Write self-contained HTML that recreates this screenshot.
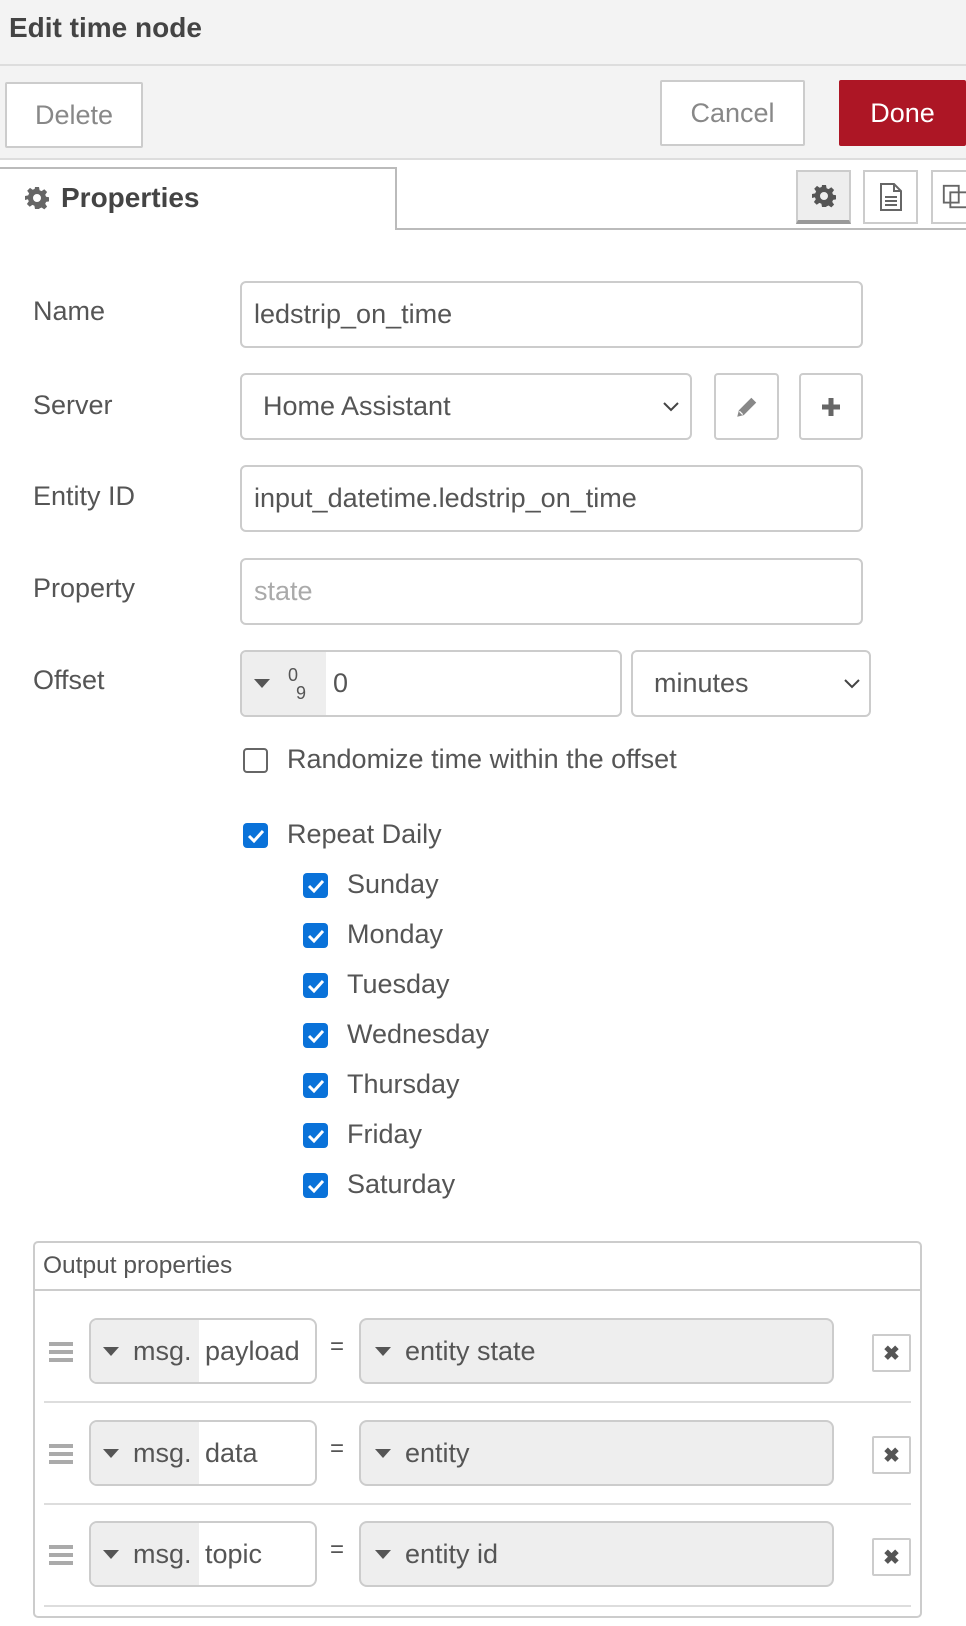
<!DOCTYPE html>
<html><head><meta charset="utf-8"><style>
*{box-sizing:border-box;margin:0;padding:0}
body{width:966px;height:1626px;background:#fff;font-family:"Liberation Sans",Arial,sans-serif;color:#555;position:relative;overflow:hidden}
.a{position:absolute}
.hdr{left:0;top:0;width:966px;height:66px;background:#f3f3f3;border-bottom:2px solid #ddd}
.bar{left:0;top:66px;width:966px;height:94px;background:#f3f3f3;border-bottom:2px solid #ddd}
.btn{background:#fff;border:2px solid #ccc;border-radius:2px;display:flex;align-items:center;justify-content:center;font-size:27px;color:#888}
.lbl{left:33px;font-size:27px;color:#555}
.inp{left:240px;width:623px;height:67px;border:2px solid #ccc;border-radius:6px;background:#fff;font-size:27px;color:#555;display:flex;align-items:center;padding-left:12px}
.cb{width:25px;height:25px;border-radius:4px;background:#0a72d9;display:flex;align-items:center;justify-content:center}
.cbt{font-size:27px;color:#555}
.fld{height:66px;border:2px solid #ccc;border-radius:8px;display:flex;align-items:center;font-size:27px;color:#555;overflow:hidden}
.sep{left:44px;width:867px;height:2px;background:#ddd}
.xb{width:39px;height:38px;border:2px solid #ccc;border-radius:2px;background:#fff;display:flex;align-items:center;justify-content:center;font-size:20px;color:#555;font-weight:bold}
.tri{width:0;height:0;border-left:8px solid transparent;border-right:8px solid transparent;border-top:9px solid #555;display:inline-block}
.hand{width:24px}
.hand div{height:4px;background:#aaa;margin-bottom:4px}
</style></head><body>
<svg width="0" height="0" style="position:absolute"><defs><symbol id="gear" viewBox="0 0 24 24"><path fill-rule="evenodd" d="M10 1h4l.6 3.2 2 .9 2.7-1.9 2.8 2.8-1.9 2.7.9 2 3.2.6v4l-3.2.6-.9 2 1.9 2.7-2.8 2.8-2.7-1.9-2 .9L14 23h-4l-.6-3.2-2-.9-2.7 1.9-2.8-2.8 1.9-2.7-.9-2L0 14v-4l3.2-.6.9-2L2.2 4.7 5 1.9l2.7 1.9 2-.9zM12 8a4 4 0 100 8 4 4 0 000-8z"/></symbol></defs></svg>
<div class="a hdr"><div class="a" style="left:9px;top:12px;font-size:28px;font-weight:bold;color:#444">Edit time node</div></div>
<div class="a bar"></div>
<div class="a btn" style="left:5px;top:82px;width:138px;height:66px">Delete</div>
<div class="a btn" style="left:660px;top:80px;width:145px;height:66px">Cancel</div>
<div class="a btn" style="left:839px;top:80px;width:127px;height:66px;background:#ad1625;border-color:#ad1625;color:#fff">Done</div>

<div class="a" style="left:396px;top:228px;width:570px;height:2px;background:#bbb"></div>
<div class="a" style="left:0;top:167px;width:397px;height:63px;border:2px solid #bbb;border-left:none;border-bottom:none;background:#fff"></div>
<svg class="a" style="left:25px;top:186px" width="24" height="24" fill="#666"><use href="#gear"/></svg>
<div class="a" style="left:61px;top:182px;font-size:28px;font-weight:bold;color:#444">Properties</div>
<div class="a" style="left:796px;top:170px;width:55px;height:54px;background:#eee;border:2px solid #ccc;border-bottom:4px solid #999;display:flex;align-items:center;justify-content:center"><svg width="24" height="24" fill="#555"><use href="#gear"/></svg></div>
<div class="a" style="left:863px;top:170px;width:55px;height:54px;background:#fff;border:2px solid #ccc;display:flex;align-items:center;justify-content:center">
<svg width="24" height="30" viewBox="0 0 24 30"><path d="M2 2h13l7 7v19H2z M15 2v7h7" fill="none" stroke="#666" stroke-width="2"/><path d="M6 15h12M6 19h12M6 23h12" stroke="#666" stroke-width="2"/></svg></div>
<div class="a" style="left:931px;top:170px;width:40px;height:54px;background:#fff;border:2px solid #ccc;display:flex;align-items:center;padding-left:8px">
<svg width="30" height="30" viewBox="0 0 30 30"><rect x="3" y="3" width="16" height="18" fill="none" stroke="#666" stroke-width="2"/><rect x="10" y="10" width="18" height="16" fill="none" stroke="#666" stroke-width="2"/></svg></div>

<div class="a lbl" style="top:296px">Name</div>
<div class="a inp" style="top:281px">ledstrip_on_time</div>
<div class="a lbl" style="top:390px">Server</div>
<div class="a inp" style="top:373px;width:452px;padding-left:21px">Home Assistant<svg class="a" style="right:10px;top:26px" width="18" height="12" viewBox="0 0 18 12"><path d="M2 2l7 7 7-7" fill="none" stroke="#444" stroke-width="2"/></svg></div>
<div class="a btn" style="left:714px;top:373px;width:65px;height:67px;border-radius:4px"><svg width="26" height="26" viewBox="0 0 24 24"><path d="M3 21l1.5-6L16 3.5l4.5 4.5L9 19.5z" fill="#888"/><path d="M5 16l3 3" stroke="#fff" stroke-width="1.2"/></svg></div>
<div class="a btn" style="left:799px;top:373px;width:64px;height:67px;border-radius:4px"><svg width="22" height="22" viewBox="0 0 22 22"><path d="M11 2v18M2 11h18" stroke="#666" stroke-width="5"/></svg></div>
<div class="a lbl" style="top:481px">Entity ID</div>
<div class="a inp" style="top:465px">input_datetime.ledstrip_on_time</div>
<div class="a lbl" style="top:573px">Property</div>
<div class="a inp" style="top:558px;color:#aaa">state</div>
<div class="a lbl" style="top:665px">Offset</div>
<div class="a inp" style="top:650px;width:382px;padding-left:0;overflow:hidden"><div style="width:84px;height:100%;background:#eee;display:flex;align-items:center;padding-left:12px"><span class="tri"></span><span style="font-size:18px;margin-left:18px;line-height:1">0<br><span style="margin-left:8px">9</span></span></div><span style="margin-left:7px">0</span></div>
<div class="a inp" style="left:631px;top:650px;width:240px;padding-left:21px">minutes<svg class="a" style="right:8px;top:26px" width="18" height="12" viewBox="0 0 18 12"><path d="M2 2l7 7 7-7" fill="none" stroke="#444" stroke-width="2"/></svg></div>

<div class="a" style="left:243px;top:748px;width:25px;height:25px;border:2px solid #666;border-radius:4px"></div>
<div class="a cbt" style="left:287px;top:744px">Randomize time within the offset</div>

<div class="a cb" style="left:243px;top:823px"><svg width="18" height="14" viewBox="0 0 18 14"><path d="M2 7l5 5L16 2" fill="none" stroke="#fff" stroke-width="3"/></svg></div>
<div class="a cbt" style="left:287px;top:819px">Repeat Daily</div>

<div class="a cb" style="left:303px;top:873px"><svg width="18" height="14" viewBox="0 0 18 14"><path d="M2 7l5 5L16 2" fill="none" stroke="#fff" stroke-width="3"/></svg></div><div class="a cbt" style="left:347px;top:869px">Sunday</div>
<div class="a cb" style="left:303px;top:923px"><svg width="18" height="14" viewBox="0 0 18 14"><path d="M2 7l5 5L16 2" fill="none" stroke="#fff" stroke-width="3"/></svg></div><div class="a cbt" style="left:347px;top:919px">Monday</div>
<div class="a cb" style="left:303px;top:973px"><svg width="18" height="14" viewBox="0 0 18 14"><path d="M2 7l5 5L16 2" fill="none" stroke="#fff" stroke-width="3"/></svg></div><div class="a cbt" style="left:347px;top:969px">Tuesday</div>
<div class="a cb" style="left:303px;top:1023px"><svg width="18" height="14" viewBox="0 0 18 14"><path d="M2 7l5 5L16 2" fill="none" stroke="#fff" stroke-width="3"/></svg></div><div class="a cbt" style="left:347px;top:1019px">Wednesday</div>
<div class="a cb" style="left:303px;top:1073px"><svg width="18" height="14" viewBox="0 0 18 14"><path d="M2 7l5 5L16 2" fill="none" stroke="#fff" stroke-width="3"/></svg></div><div class="a cbt" style="left:347px;top:1069px">Thursday</div>
<div class="a cb" style="left:303px;top:1123px"><svg width="18" height="14" viewBox="0 0 18 14"><path d="M2 7l5 5L16 2" fill="none" stroke="#fff" stroke-width="3"/></svg></div><div class="a cbt" style="left:347px;top:1119px">Friday</div>
<div class="a cb" style="left:303px;top:1173px"><svg width="18" height="14" viewBox="0 0 18 14"><path d="M2 7l5 5L16 2" fill="none" stroke="#fff" stroke-width="3"/></svg></div><div class="a cbt" style="left:347px;top:1169px">Saturday</div>

<div class="a" style="left:33px;top:1241px;width:889px;height:377px;border:2px solid #ccc;border-radius:5px"></div>
<div class="a" style="left:43px;top:1252px;font-size:24.5px;color:#555">Output properties</div>
<div class="a" style="left:35px;top:1289px;width:885px;height:2px;background:#ccc"></div>

<div class="a hand" style="left:49px;top:1342px"><div></div><div></div><div></div></div>
<div class="a fld" style="left:89px;top:1318px;width:228px"><div style="width:108px;height:100%;background:#eee;display:flex;align-items:center;padding-left:12px"><span class="tri"></span><span style="margin-left:14px">msg.</span></div><span style="margin-left:6px">payload</span></div>
<div class="a" style="left:330px;top:1333px;font-size:24px">=</div>
<div class="a fld" style="left:359px;top:1318px;width:475px;background:#eee;padding-left:14px"><span class="tri"></span><span style="margin-left:14px">entity state</span></div>
<div class="a xb" style="left:872px;top:1334px">✖</div>
<div class="a sep" style="top:1401px"></div>

<div class="a hand" style="left:49px;top:1444px"><div></div><div></div><div></div></div>
<div class="a fld" style="left:89px;top:1420px;width:228px"><div style="width:108px;height:100%;background:#eee;display:flex;align-items:center;padding-left:12px"><span class="tri"></span><span style="margin-left:14px">msg.</span></div><span style="margin-left:6px">data</span></div>
<div class="a" style="left:330px;top:1435px;font-size:24px">=</div>
<div class="a fld" style="left:359px;top:1420px;width:475px;background:#eee;padding-left:14px"><span class="tri"></span><span style="margin-left:14px">entity</span></div>
<div class="a xb" style="left:872px;top:1436px">✖</div>
<div class="a sep" style="top:1503px"></div>

<div class="a hand" style="left:49px;top:1545px"><div></div><div></div><div></div></div>
<div class="a fld" style="left:89px;top:1521px;width:228px"><div style="width:108px;height:100%;background:#eee;display:flex;align-items:center;padding-left:12px"><span class="tri"></span><span style="margin-left:14px">msg.</span></div><span style="margin-left:6px">topic</span></div>
<div class="a" style="left:330px;top:1536px;font-size:24px">=</div>
<div class="a fld" style="left:359px;top:1521px;width:475px;background:#eee;padding-left:14px"><span class="tri"></span><span style="margin-left:14px">entity id</span></div>
<div class="a xb" style="left:872px;top:1538px">✖</div>
<div class="a sep" style="top:1605px"></div>
</body></html>
